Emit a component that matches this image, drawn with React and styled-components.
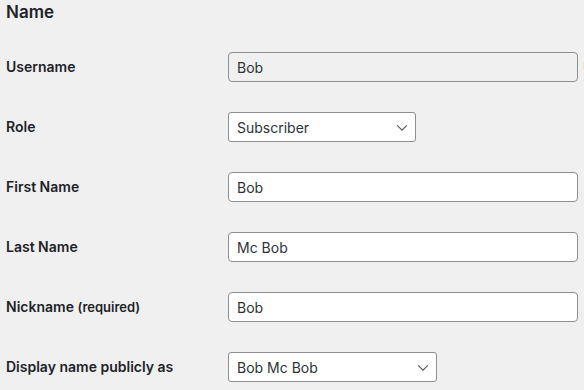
import React from 'react'
import styled, { createGlobalStyle } from 'styled-components'

const GlobalStyle = createGlobalStyle`
	html, body {
		margin: 0;
		padding: 0;
		background: #f0f0f1;
		overflow: hidden;
	}
	body {
		font-family: Inter, "Liberation Sans", sans-serif;
		color: #1d2327;
		font-size: 14px;
	}
`

const Page = styled.div`
	width: 584px;
	height: 390px;
	padding-left: 6px;
	box-sizing: border-box;
	overflow: hidden;
`

const Heading = styled.h2`
	margin: 0;
	height: 37px;
	padding-top: 2px;
	box-sizing: border-box;
	font-size: 17px;
	font-weight: 600;
	line-height: 20px;
	color: #1d2327;
`

const Table = styled.div`
	display: flex;
	flex-direction: column;
`

const Row = styled.div`
	display: grid;
	grid-template-columns: 222px 1fr;
	align-items: center;
	height: 60px;
`

const Label = styled.label`
	font-size: 14px;
	font-weight: 600;
	color: #1d2327;
	line-height: 20px;

	small {
		font-size: 13px;
		font-weight: 600;
	}
`

const Field = styled.div`
	display: flex;
	align-items: center;
	gap: 5px;
	white-space: nowrap;
`

const TextInput = styled.input`
	width: 350px;
	height: 30px;
	box-sizing: border-box;
	padding: 0 8px;
	border: 1px solid #8c8f94;
	border-radius: 4px;
	background: ${p => (p.readOnly ? '#f0f0f1' : '#fff')};
	color: #2c3338;
	font-family: inherit;
	font-size: 14px;
	flex-shrink: 0;
	outline: none;
`

const SelectBox = styled.div`
	position: relative;
	width: ${p => p.$width}px;
	height: 30px;
	box-sizing: border-box;
	padding: 0 24px 0 8px;
	border: 1px solid #8c8f94;
	border-radius: 3px;
	background: #fff;
	color: #2c3338;
	display: flex;
	align-items: center;
	font-size: 14px;

	svg {
		position: absolute;
		right: 5px;
		top: 6px;
	}
`

const Description = styled.span`
	color: #1d2327;
	font-size: 13px;
`

const Chevron = () => (
	<svg width="16" height="16" viewBox="0 0 20 20">
		<path d="M4 8l6 6 6-6" fill="none" stroke="#50575e" strokeWidth="1.4" />
	</svg>
)

const Select = ({ value, width }) => (
	<SelectBox $width={width}>
		{value}
		<Chevron />
	</SelectBox>
)

const App = () => {
	return (
		<Page>
			<GlobalStyle />
			<Heading>Name</Heading>
			<Table>
				<Row>
					<Label>Username</Label>
					<Field>
						<TextInput readOnly defaultValue="Bob" />
						<Description>Usernames cannot be changed.</Description>
					</Field>
				</Row>
				<Row>
					<Label>Role</Label>
					<Field>
						<Select value="Subscriber" width={188} />
					</Field>
				</Row>
				<Row>
					<Label>First Name</Label>
					<Field>
						<TextInput defaultValue="Bob" />
					</Field>
				</Row>
				<Row>
					<Label>Last Name</Label>
					<Field>
						<TextInput defaultValue="Mc Bob" />
					</Field>
				</Row>
				<Row>
					<Label>
						Nickname <small>(required)</small>
					</Label>
					<Field>
						<TextInput defaultValue="Bob" />
					</Field>
				</Row>
				<Row>
					<Label>Display name publicly as</Label>
					<Field>
						<Select value="Bob Mc Bob" width={209} />
					</Field>
				</Row>
			</Table>
		</Page>
	)
}

export default App
